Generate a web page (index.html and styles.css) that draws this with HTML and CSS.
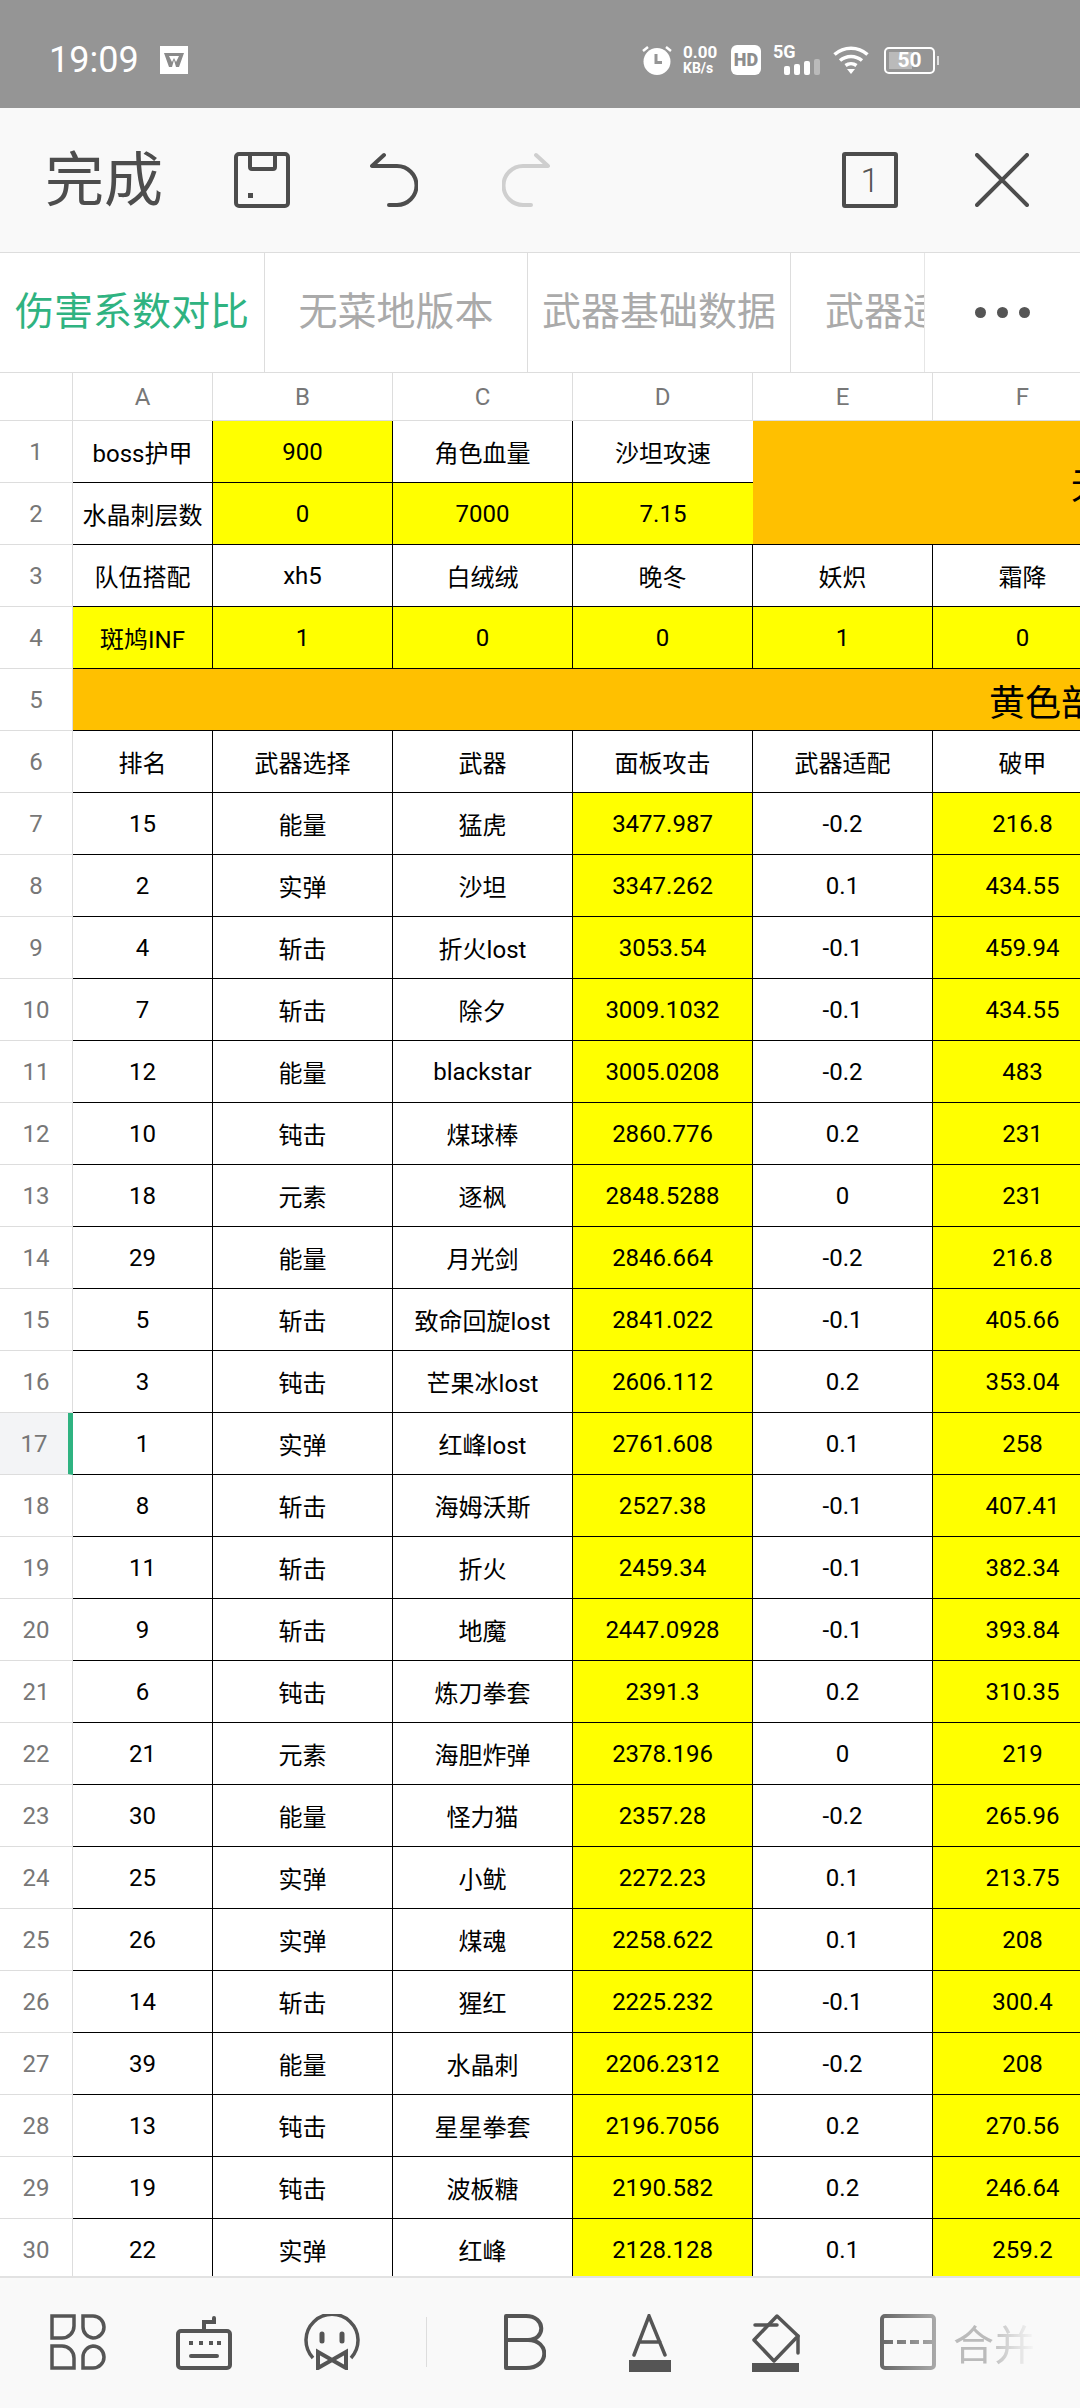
FILE: index.html
```html
<!DOCTYPE html>
<html>

<head>
  <meta charset="utf8">
  <meta name="viewport" content="width=device-width, initial-scale=1.0">
  <link rel="stylesheet" href="styles.css">
  <title>伤害系数对比</title>
</head>

<body>
  <div class="status-bar">
    <span class="clock">19:09</span>
    <svg class="wps" width="28" height="28" viewBox="0 0 28 28">
      <rect width="28" height="28" fill="#fff"/>
      <path d="M4 7h20l-5 14h-3l-2-7-2 7H9z" fill="#8a8a8a"/>
      <path d="M9 10l3 6 2-4 2 4 3-6z" fill="#fff"/>
    </svg>
    <div class="status-right">
      <svg class="alarm" width="30" height="30" viewBox="0 0 30 30">
        <circle cx="15" cy="16.500" r="13.500" fill="#fff"/>
        <path d="M1 6l5-4M29 6l-5-4" stroke="#fff" stroke-width="2.500"/>
        <path d="M14 9v8.500h6" fill="none" stroke="#959595" stroke-width="3"/>
      </svg>
      <div class="speed"><span>0.00</span><span class="speed-unit">KB/s</span></div>
      <div class="hd">HD</div>
      <div class="net">
        <span class="net-label">5G</span>
        <div class="bars">
          <i class="bar bar1"></i><i class="bar bar2"></i><i class="bar bar3"></i><i class="bar bar4"></i>
        </div>
      </div>
      <svg class="wifi" width="36" height="28" viewBox="0 0 36 28">
        <path d="M1.500 8.500C11 0 25 0 34.500 8.500M7 14.500c6.500-5.500 15.500-5.500 22 0" fill="none" stroke="#fff" stroke-width="3.500"/>
        <path d="M12.500 19.500c3.300-2.500 7.700-2.500 11 0" fill="none" stroke="#fff" stroke-width="3.500"/>
        <path d="M14 23h8l-4 5z" fill="#fff"/>
      </svg>
      <div class="battery"><i class="battery-level"></i><span class="battery-text">50</span></div>
      <i class="battery-nub"></i>
    </div>
  </div>

  <div class="toolbar">
    <span class="done">完成</span>
    <svg class="tb-save" width="56" height="56" viewBox="0 0 56 56" fill="none" stroke="#4d4d4d" stroke-width="4">
      <rect x="2" y="2" width="52" height="52" rx="3"/>
      <path d="M16 2v13a2 2 0 0 0 2 2h21a2 2 0 0 0 2-2V2"/>
      <rect x="14" y="41" width="5" height="5" fill="#4d4d4d" stroke="none"/>
    </svg>
    <svg class="tb-undo" width="48" height="56" viewBox="0 0 48 56" fill="none" stroke="#4d4d4d" stroke-width="4" stroke-linecap="round" stroke-linejoin="round">
      <path d="M14 3L2 14H27a19.500 19.500 0 0 1 0 39H19"/>
    </svg>
    <svg class="tb-redo" width="48" height="56" viewBox="0 0 48 56" fill="none" stroke="#cfcfcf" stroke-width="4" stroke-linecap="round" stroke-linejoin="round">
      <path d="M34 3L46 14H21a19.500 19.500 0 0 0 0 39H29"/>
    </svg>
    <div class="tb-page">1</div>
    <svg class="tb-close" width="54" height="54" viewBox="0 0 54 54" fill="none" stroke="#4d4d4d" stroke-width="4" stroke-linecap="round">
      <path d="M2 2L52 52M52 2L2 52"/>
    </svg>
  </div>

  <div class="tabs">
    <div class="tab-strip">
      <div class="tab tab-active">伤害系数对比</div>
      <div class="tab">无菜地版本</div>
      <div class="tab">武器基础数据</div>
      <div class="tab">武器适配</div>
    </div>
    <div class="tab-more"><i></i><i></i><i></i></div>
  </div>

  <div class="sheet">
    <table>
      <colgroup>
        <col class="col-head"><col class="col-a"><col class="col-n"><col class="col-n"><col class="col-n"><col class="col-n"><col class="col-n">
      </colgroup>
      <tr class="head"><th></th><th>A</th><th>B</th><th>C</th><th>D</th><th>E</th><th>F</th></tr>
      <tr><th>1</th><td>boss护甲</td><td class="y">900</td><td>角色血量</td><td class="open">沙坦攻速</td><td class="o big merged" rowspan="2" colspan="2">无</td></tr>
      <tr><th>2</th><td>水晶刺层数</td><td class="y">0</td><td class="y">7000</td><td class="y open">7.15</td></tr>
      <tr><th>3</th><td>队伍搭配</td><td>xh5</td><td>白绒绒</td><td>晚冬</td><td>妖炽</td><td>霜降</td></tr>
      <tr><th>4</th><td class="y">斑鸠INF</td><td class="y">1</td><td class="y">0</td><td class="y">0</td><td class="y">1</td><td class="y">0</td></tr>
      <tr><th>5</th><td class="o big banner" colspan="6">黄色部分</td></tr>
      <tr><th>6</th><td>排名</td><td>武器选择</td><td>武器</td><td>面板攻击</td><td>武器适配</td><td>破甲</td></tr>
      <tr><th>7</th><td>15</td><td>能量</td><td>猛虎</td><td class="y">3477.987</td><td>-0.2</td><td class="y">216.8</td></tr>
      <tr><th>8</th><td>2</td><td>实弹</td><td>沙坦</td><td class="y">3347.262</td><td>0.1</td><td class="y">434.55</td></tr>
      <tr><th>9</th><td>4</td><td>斩击</td><td>折火lost</td><td class="y">3053.54</td><td>-0.1</td><td class="y">459.94</td></tr>
      <tr><th>10</th><td>7</td><td>斩击</td><td>除夕</td><td class="y">3009.1032</td><td>-0.1</td><td class="y">434.55</td></tr>
      <tr><th>11</th><td>12</td><td>能量</td><td>blackstar</td><td class="y">3005.0208</td><td>-0.2</td><td class="y">483</td></tr>
      <tr><th>12</th><td>10</td><td>钝击</td><td>煤球棒</td><td class="y">2860.776</td><td>0.2</td><td class="y">231</td></tr>
      <tr><th>13</th><td>18</td><td>元素</td><td>逐枫</td><td class="y">2848.5288</td><td>0</td><td class="y">231</td></tr>
      <tr><th>14</th><td>29</td><td>能量</td><td>月光剑</td><td class="y">2846.664</td><td>-0.2</td><td class="y">216.8</td></tr>
      <tr><th>15</th><td>5</td><td>斩击</td><td>致命回旋lost</td><td class="y">2841.022</td><td>-0.1</td><td class="y">405.66</td></tr>
      <tr><th>16</th><td>3</td><td>钝击</td><td>芒果冰lost</td><td class="y">2606.112</td><td>0.2</td><td class="y">353.04</td></tr>
      <tr><th class="row-active">17</th><td>1</td><td>实弹</td><td>红峰lost</td><td class="y">2761.608</td><td>0.1</td><td class="y">258</td></tr>
      <tr><th>18</th><td>8</td><td>斩击</td><td>海姆沃斯</td><td class="y">2527.38</td><td>-0.1</td><td class="y">407.41</td></tr>
      <tr><th>19</th><td>11</td><td>斩击</td><td>折火</td><td class="y">2459.34</td><td>-0.1</td><td class="y">382.34</td></tr>
      <tr><th>20</th><td>9</td><td>斩击</td><td>地魔</td><td class="y">2447.0928</td><td>-0.1</td><td class="y">393.84</td></tr>
      <tr><th>21</th><td>6</td><td>钝击</td><td>炼刀拳套</td><td class="y">2391.3</td><td>0.2</td><td class="y">310.35</td></tr>
      <tr><th>22</th><td>21</td><td>元素</td><td>海胆炸弹</td><td class="y">2378.196</td><td>0</td><td class="y">219</td></tr>
      <tr><th>23</th><td>30</td><td>能量</td><td>怪力猫</td><td class="y">2357.28</td><td>-0.2</td><td class="y">265.96</td></tr>
      <tr><th>24</th><td>25</td><td>实弹</td><td>小鱿</td><td class="y">2272.23</td><td>0.1</td><td class="y">213.75</td></tr>
      <tr><th>25</th><td>26</td><td>实弹</td><td>煤魂</td><td class="y">2258.622</td><td>0.1</td><td class="y">208</td></tr>
      <tr><th>26</th><td>14</td><td>斩击</td><td>猩红</td><td class="y">2225.232</td><td>-0.1</td><td class="y">300.4</td></tr>
      <tr><th>27</th><td>39</td><td>能量</td><td>水晶刺</td><td class="y">2206.2312</td><td>-0.2</td><td class="y">208</td></tr>
      <tr><th>28</th><td>13</td><td>钝击</td><td>星星拳套</td><td class="y">2196.7056</td><td>0.2</td><td class="y">270.56</td></tr>
      <tr><th>29</th><td>19</td><td>钝击</td><td>波板糖</td><td class="y">2190.582</td><td>0.2</td><td class="y">246.64</td></tr>
      <tr><th>30</th><td>22</td><td>实弹</td><td>红峰</td><td class="y">2128.128</td><td>0.1</td><td class="y">259.2</td></tr>
    </table>
  </div>

  <div class="bottom-bar">
    <svg class="bb-apps" width="56" height="56" viewBox="0 0 56 56" fill="none" stroke="#555" stroke-width="3.500">
      <path d="M2 2H24V12A12 12 0 0 1 12 24H2Z"/>
      <path d="M33 2H43A11 11 0 0 1 43 24A11 11 0 0 1 33 13Z"/>
      <path d="M2 32H12A12 12 0 0 1 24 44V54H2Z"/>
      <path d="M33 54V43A11 11 0 0 1 43 32A11 11 0 0 1 43 54Z"/>
    </svg>
    <svg class="bb-keys" width="56" height="56" viewBox="0 0 56 56" fill="none" stroke="#555" stroke-width="4" stroke-linecap="round">
      <rect x="2" y="17" width="52" height="37" rx="3"/>
      <path d="M28 16V8H38V4M15 42H41"/>
      <path d="M13 29h4M23 29h4M33 29h4M41 29h4" stroke-linecap="butt"/>
    </svg>
    <svg class="bb-face" width="56" height="56" viewBox="0 0 56 56" fill="none" stroke="#555" stroke-width="3.500">
      <path d="M9 44A26 26 0 1 1 47 44"/>
      <path d="M14 38L42 54V38L14 54Z" stroke-width="4"/>
      <path d="M18 20v7M38 20v7" stroke-width="5" stroke-linecap="round"/>
    </svg>
    <i class="bb-sep"></i>
    <svg class="bb-bold" width="42" height="56" viewBox="0 0 42 56" fill="none" stroke="#555" stroke-width="4" stroke-linejoin="round">
      <path d="M2 2H22C42 2 42 26 24 26C46 26 46 54 22 54H2Z"/>
      <path d="M2 26H24"/>
    </svg>
    <svg class="bb-color" width="42" height="58" viewBox="0 0 42 58" fill="none" stroke="#555" stroke-width="3.500" stroke-linecap="round">
      <path d="M5 41L20 2L36 41M10 28H31"/>
      <rect y="46" width="42" height="12" fill="#555" stroke="none"/>
    </svg>
    <svg class="bb-fill" width="48" height="58" viewBox="0 0 48 58" fill="none" stroke="#555" stroke-width="3.500" stroke-linecap="round" stroke-linejoin="round">
      <path d="M25 2L46 22L22 47L2 26L25 2"/>
      <path d="M3 11H25M46 22V39"/>
      <rect y="49" width="47" height="9" fill="#555" stroke="none"/>
    </svg>
    <svg class="bb-merge" width="56" height="56" viewBox="0 0 56 56" fill="none">
      <defs>
        <linearGradient id="merge-fade" gradientUnits="userSpaceOnUse" x1="0" x2="56" y1="0" y2="0">
          <stop offset="0" stop-color="#666"/>
          <stop offset="1" stop-color="#aaa"/>
        </linearGradient>
      </defs>
      <rect x="2" y="2" width="52" height="52" rx="3" stroke="url(#merge-fade)" stroke-width="4"/>
      <path d="M4 28H52" stroke="url(#merge-fade)" stroke-width="4" stroke-dasharray="9 4"/>
    </svg>
    <span class="bb-label">合并</span>
  </div>
</body>

</html>
```

FILE: styles.css
```css
* {
  box-sizing: border-box;
}
body {
  margin: 0;
  width: 1080px;
  height: 2408px;
  overflow: hidden;
  display: flex;
  flex-direction: column;
  font-family: Roboto, "Noto Sans CJK SC", sans-serif;
  background: #fff;
}

.status-bar {
  height: 108px;
  flex: none;
  display: flex;
  align-items: center;
  padding: 12px 0 0 49px;
  background: #959595;
  color: #fff;
}
.clock {
  width: 111px;
  font-size: 36px;
}
.wps {
  display: block;
}
.status-right {
  margin-left: auto;
  padding-right: 141px;
  display: flex;
  align-items: center;
}
.alarm {
  display: block;
}
.speed {
  width: 36px;
  margin-left: 11px;
  display: flex;
  flex-direction: column;
  font-size: 17px;
  font-weight: 700;
  line-height: 16px;
}
.speed-unit {
  font-size: 14px;
}
.hd {
  width: 30px;
  height: 30px;
  margin-left: 12px;
  border-radius: 6px;
  background: #fff;
  color: #8d8d8d;
  font-size: 18px;
  font-weight: 900;
  line-height: 30px;
  text-align: center;
}
.net {
  width: 47px;
  margin-left: 12px;
  display: flex;
  flex-direction: column;
}
.net-label {
  font-size: 18px;
  font-weight: 700;
  line-height: 14px;
}
.bars {
  height: 16px;
  display: flex;
  align-items: flex-end;
  justify-content: flex-end;
  gap: 4px;
}
.bar {
  width: 6px;
  background: #fff;
  border-radius: 2px;
}
.bar1 { height: 9px; }
.bar2 { height: 11px; }
.bar3 { height: 14px; }
.bar4 { height: 16px; background: rgba(255, 255, 255, 0.35); }
.wifi {
  display: block;
  margin-left: 13px;
}
.battery {
  position: relative;
  width: 51px;
  height: 27px;
  margin-left: 15px;
  border: 2px solid #fff;
  border-radius: 5px;
  text-align: center;
  font-size: 21px;
  font-weight: 700;
  line-height: 23px;
}
.battery-level {
  position: absolute;
  left: 3px;
  top: 3px;
  bottom: 3px;
  width: 23px;
  background: rgba(255, 255, 255, 0.35);
}
.battery-text {
  position: relative;
}
.battery-nub {
  width: 2px;
  height: 9px;
  margin-left: 2px;
  background: rgba(255, 255, 255, 0.7);
}

.toolbar {
  height: 144px;
  flex: none;
  display: flex;
  align-items: center;
  padding-left: 45px;
  background: #f9f9f9;
  color: #4d4d4d;
}
.done {
  width: 189px;
  font-size: 59px;
  line-height: 1;
}
.tb-undo {
  margin-left: 80px;
}
.tb-redo {
  margin-left: 84px;
}
.tb-page {
  width: 56px;
  height: 56px;
  margin-left: auto;
  border: 4px solid #4d4d4d;
  border-radius: 3px;
  color: #555;
  font-size: 34px;
  font-weight: 300;
  line-height: 48px;
  text-align: center;
}
.tb-close {
  margin: 0 51px 0 77px;
}

.tabs {
  height: 120px;
  flex: none;
  display: flex;
  border-top: 1px solid #ddd;
  background: #fff;
}
.tab-strip {
  width: 924px;
  display: flex;
  overflow: hidden;
}
.tab {
  width: 263px;
  flex: none;
  border-right: 1px solid #ddd;
  color: #aaa;
  font-size: 39px;
  line-height: 118px;
  text-align: center;
  white-space: nowrap;
}
.tab:first-child {
  width: 265px;
}
.tab:last-child {
  padding-left: 34px;
  text-align: left;
  border-right: 0;
}
.tab-active {
  color: #2fb381;
}
.tab-more {
  flex: 1;
  display: flex;
  align-items: center;
  justify-content: center;
  gap: 11px;
  border-left: 1px solid #e6e6e6;
}
.tab-more i {
  width: 11px;
  height: 11px;
  border-radius: 50%;
  background: #555;
}

.sheet {
  flex: 1;
  overflow: hidden;
  border-top: 1px solid #ddd;
}
table {
  width: 1112px;
  table-layout: fixed;
  border-collapse: separate;
  border-spacing: 0;
}
.col-head { width: 73px; }
.col-a { width: 140px; }
.col-n { width: 180px; }
tr {
  height: 62px;
}
tr.head {
  height: 48px;
}
th, td {
  padding: 0;
  font-size: 24px;
  font-weight: 400;
  text-align: center;
  white-space: nowrap;
  overflow: hidden;
}
th {
  color: #777;
  border-right: 1px solid #ddd;
  border-bottom: 1px solid #ddd;
}
td {
  color: #000;
  border-right: 1px solid #000;
  border-bottom: 1px solid #000;
}
.y {
  background: #ff0;
}
.o {
  background: #ffc000;
  border-right: 0;
}
.big {
  font-size: 36px;
  text-align: left;
}
.merged {
  padding-left: 318px;
}
.banner {
  padding-left: 916px;
}
td.open {
  border-right: 0;
}
.row-active {
  background: #f3f4f6;
  border-right: 5px solid #2fb381;
}

.bottom-bar {
  height: 132px;
  flex: none;
  display: flex;
  align-items: center;
  padding: 0 0 2px 50px;
  border-top: 2px solid #e2e2e2;
  background: #f9f9f9;
}
.bb-keys {
  margin-left: 70px;
}
.bb-face {
  margin-left: 72px;
}
.bb-sep {
  width: 1px;
  height: 50px;
  margin-left: 66px;
  background: #ddd;
}
.bb-bold {
  margin-left: 77px;
}
.bb-color {
  margin: 2px 0 0 83px;
}
.bb-fill {
  margin: 2px 0 0 81px;
}
.bb-merge {
  margin-left: 80px;
}
.bb-label {
  width: 88px;
  margin-left: 17px;
  font-size: 41px;
  color: #bbb;
  -webkit-mask-image: linear-gradient(to right, #000 40%, transparent 95%);
  mask-image: linear-gradient(to right, #000 40%, transparent 95%);
}
```
